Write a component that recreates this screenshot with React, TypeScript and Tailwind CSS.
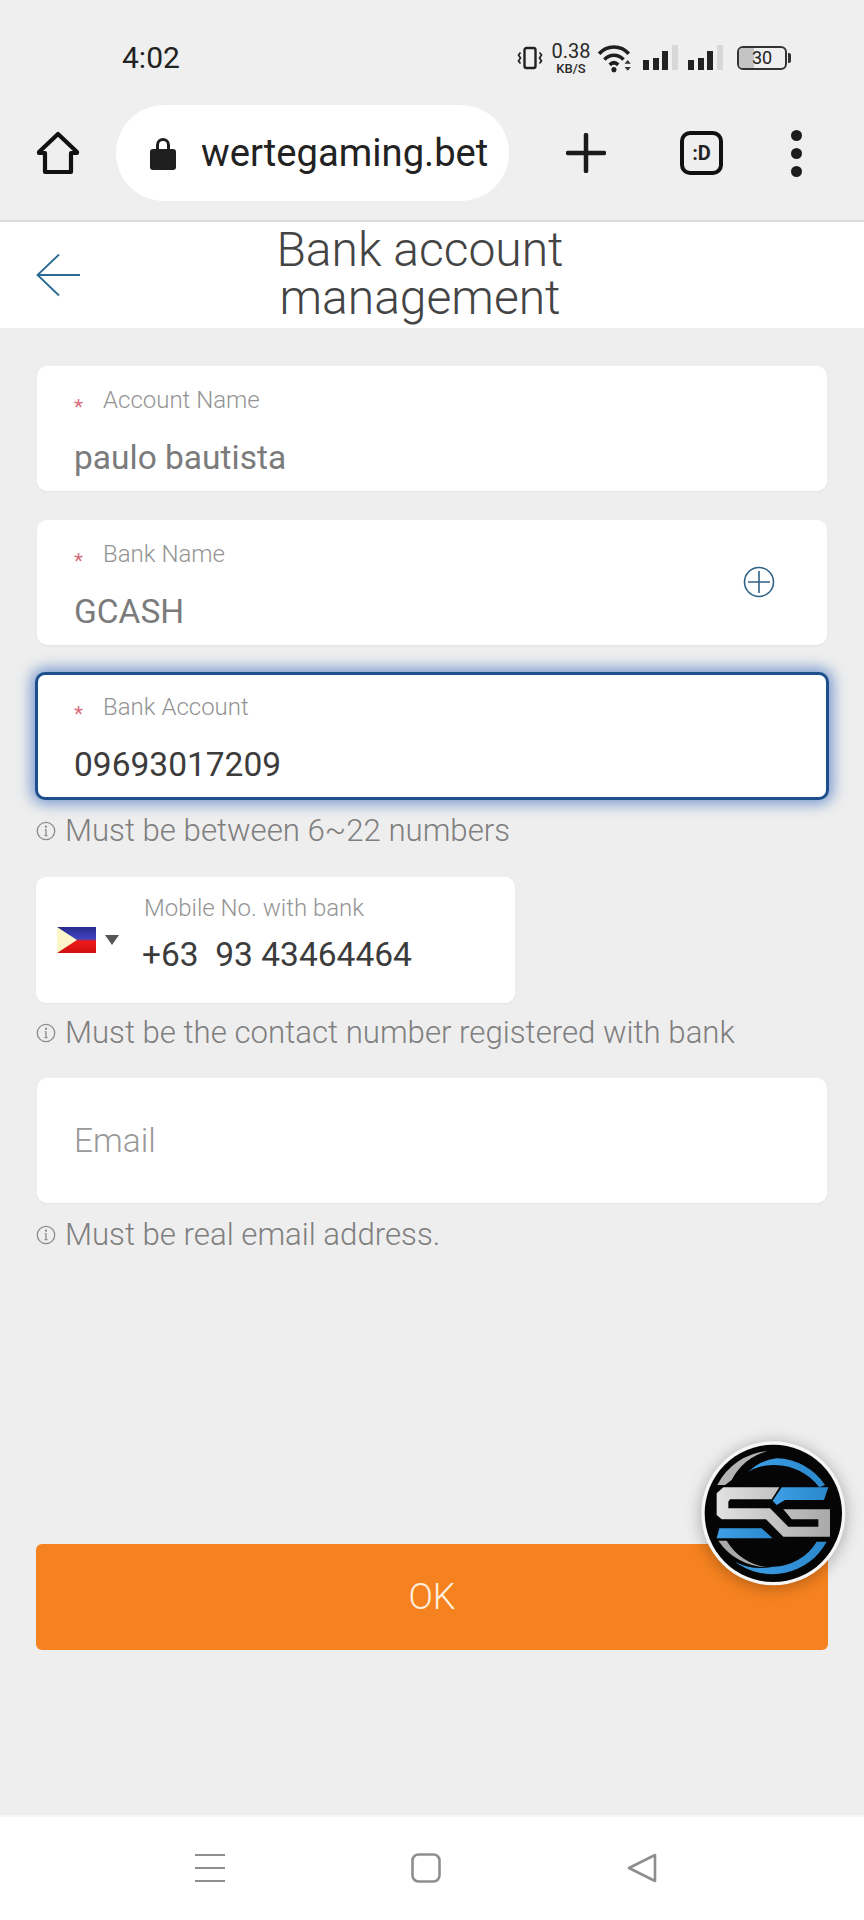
const Star = () => <span className="w-[29px] shrink-0 text-[21px] leading-none text-[#d9707f] pt-[11px] h-[28px]">*</span>;

function Field({ label, value, dark, plus, focused }: { label: string; value: string; dark?: boolean; plus?: boolean; focused?: boolean }) {
  return (
    <div className={focused
      ? "mt-[27px] -mx-[2px] h-[128px] rounded-[10px] bg-white border-[3px] border-[#1d4f8c] shadow-[0_0_14px_4px_rgba(60,110,190,0.65)] flex items-center pl-[36px] pr-[52px]"
      : "h-[125px] rounded-[10px] bg-white shadow-[0_1px_2px_rgba(0,0,0,0.05)] flex items-center pl-[37px] pr-[52px]"}>
      <div className="flex-1 pt-[8px]">
        <div className="flex items-start h-[28px]">
          <Star />
          <span className="text-[24px] leading-[28px] font-light text-[#949494]">{label}</span>
        </div>
        <div className={"mt-[22px] h-[44px] text-[33.5px] leading-[44px] " + (dark ? "text-[#3c3c3c]" : "text-[#7b7b7b]")}>{value}</div>
      </div>
      {plus && (
        <svg width="32" height="32" viewBox="0 0 32 32" fill="none" stroke="#2d6285" strokeWidth="1.6" className="mb-[2px]">
          <circle cx="16" cy="16" r="14.5" />
          <path d="M16 5v22M5 16h22" />
        </svg>
      )}
    </div>
  );
}

function Hint({ children, className }: { children: string; className: string }) {
  return (
    <div className={"flex items-center h-[40px] " + className}>
      <svg width="20" height="20" viewBox="0 0 20 20" fill="none" stroke="#8c8c8c" strokeWidth="1.3" className="shrink-0">
        <circle cx="10" cy="10" r="8.7" />
        <path d="M10 8.6v6M8.5 14.6h3M8.8 8.6H10" />
        <circle cx="10" cy="5.7" r="0.5" fill="#8c8c8c" />
      </svg>
      <span className="ml-[9px] text-[31.2px] leading-[40px] font-light text-[#7f7f7f]">{children}</span>
    </div>
  );
}

function Logo() {
  return (
    <svg width="146" height="146" viewBox="60 30 438 438" className="absolute left-[700px] top-[1440px] drop-shadow-[0_2px_8px_rgba(0,0,0,0.3)]">
      <defs>
        <linearGradient id="sg" x1="0" y1="0" x2="1" y2="0">
          <stop offset="0" stopColor="#e2e2e2" />
          <stop offset="0.5" stopColor="#c4c4c4" />
          <stop offset="1" stopColor="#a9a9a9" />
        </linearGradient>
        <linearGradient id="sb" x1="0" y1="0" x2="1" y2="0">
          <stop offset="0" stopColor="#3d9fe6" />
          <stop offset="1" stopColor="#2b88cc" />
        </linearGradient>
      </defs>
      <circle cx="280" cy="250" r="216" fill="#f6f6f6" />
      <circle cx="280" cy="250" r="206" fill="#050505" />
      <path d="M112 165A188 188 0 0 1 262 63A175 175 0 0 0 155 150L135 165Z" fill="#b4b4b4" />
      <path d="M205 125A150 150 0 0 1 290 85A180 180 0 0 1 435 165L418 172A170 170 0 0 0 285 105A140 140 0 0 0 205 125Z" fill="url(#sb)" />
      <path d="M115 332H140A165 165 0 0 0 262 412A180 180 0 0 1 115 332Z" fill="#a9a9a9" />
      <path d="M165 395A185 185 0 0 0 440 335H410A155 155 0 0 1 280 410A170 170 0 0 1 165 395Z" fill="url(#sb)" />
      <path d="M130 172H298L275 208H150L145 215V235H270L325 290H415V268H335L310 238H450V320H310L258 268H125L110 255V190Z" fill="url(#sg)" />
      <path d="M305 172H445L432 210H315L290 225L278 212Z" fill="url(#sb)" />
      <path d="M118 295H245L278 325H110Z" fill="url(#sb)" />
    </svg>
  );
}

function Signal({ className }: { className: string }) {
  return (
    <svg width="36" height="26" viewBox="0 0 36 26" className={className}>
      <rect x="0" y="15" width="6" height="10" fill="#222" />
      <rect x="10" y="13" width="6" height="12" fill="#222" />
      <rect x="19" y="6" width="6" height="19" fill="#222" />
      <rect x="29" y="0" width="6" height="25" fill="#d8d8d8" />
    </svg>
  );
}

export default function App() {
  return (
    <div className="relative w-[864px] h-[1920px] bg-[#eeeeee] flex flex-col overflow-hidden font-['Roboto',sans-serif]">
      <div className="h-[222px] shrink-0 bg-[#efefef] border-b-[2px] border-[#dcdcdc]">
        <div className="mt-0 pt-[40px] h-[76px] flex items-center pl-[122px] pr-[73px]">
          <span className="text-[30px] leading-[36px] text-[#222]">4:02</span>
          <div className="ml-auto flex items-center h-[36px] text-[#2a2a2a]">
            <svg width="26" height="26" viewBox="0 0 26 26" fill="none" stroke="#222" strokeWidth="2.4">
              <rect x="7.5" y="3" width="11" height="20" rx="2" />
              <path d="M3.5 7.5 1.5 10l2 3-2 3 2 2.5M22.5 7.500l2 2.500-2 3 2 3-2 2.500" strokeWidth="1.700" />
            </svg>
            <div className="ml-[8px] w-[40px] flex flex-col items-center gap-[1px]">
              <div className="text-[20px] leading-[20px]">0.38</div>
              <div className="text-[13px] leading-[14px] font-medium">KB/S</div>
            </div>
            <svg width="36" height="30" viewBox="0 0 34 28" className="ml-[6px]" fill="none" stroke="#1f1f1f" strokeWidth="3.4">
              <path d="M2 10C9.5 1.5 22.5 1.5 30 10" />
              <path d="M7 15.5c5-5.5 13-5.5 18 0" />
              <path d="M12 20.5c2.5-2.5 5.500-2.500 8 0" />
              <circle cx="16" cy="25" r="2.400" fill="#1f1f1f" stroke="none" />
              <path d="M26 19.500l3-3.500 3 3.500zM26 22.500l3 3.500 3-3.500z" fill="#333" stroke="none" />
            </svg>
            <Signal className="ml-[10px]" />
            <Signal className="ml-[9px]" />
            <div className="ml-[13px] relative w-[50px] h-[24px] rounded-[6px] border-[2px] border-[#333] flex items-center justify-center overflow-hidden">
              <div className="absolute left-0 top-0 bottom-0 w-[15px] bg-[#c4c4c4]" />
              <span className="relative text-[18px] leading-[20px] text-[#222]">30</span>
            </div>
            <div className="ml-[1px] w-[3px] h-[10px] rounded-r-[2px] bg-[#333]" />
          </div>
        </div>
        <div className="mt-[29px] h-[96px] flex items-center pl-[36px]">
          <svg width="44" height="44" viewBox="0 0 44 44" fill="none" stroke="#111" strokeWidth="4.2" strokeLinejoin="round" strokeLinecap="round">
            <path d="M22 3 3 21v1h6v19h26V22h6v-1z" />
          </svg>
          <div className="ml-[36px] w-[393px] h-[96px] rounded-[48px] bg-white flex items-center pl-[34px]">
            <svg width="26" height="34" viewBox="0 0 26 34" fill="#1f1f1f">
              <path d="M6 14V9a7 7 0 0 1 14 0v5h-3V9a4 4 0 0 0-8 0v5z" />
              <rect x="0" y="13" width="26" height="21" rx="3" />
            </svg>
            <span className="ml-[25px] text-[38.2px] leading-[44px] text-[#222] whitespace-nowrap">wertegaming.bet</span>
          </div>
          <svg width="40" height="40" viewBox="0 0 40 40" className="ml-[57px]" stroke="#1a1a1a" strokeWidth="4.500" strokeLinecap="round">
            <path d="M20 2v36M2 20h36" />
          </svg>
          <div className="ml-[74px] w-[43px] h-[44px] rounded-[10px] border-[4.5px] border-[#111] flex items-center justify-center">
            <span className="text-[20px] leading-none font-bold text-[#222]">:D</span>
          </div>
          <div className="ml-[68px] flex flex-col gap-[7px]">
            <div className="w-[11px] h-[11px] rounded-full bg-[#1d1d1d]" />
            <div className="w-[11px] h-[11px] rounded-full bg-[#1d1d1d]" />
            <div className="w-[11px] h-[11px] rounded-full bg-[#1d1d1d]" />
          </div>
        </div>
      </div>

      <div className="h-[106px] shrink-0 bg-white flex items-center pl-[37px]">
        <svg width="44" height="44" viewBox="0 0 44 44" fill="none" stroke="#2a6a94" strokeWidth="1.8" className="-mt-[1px] -ml-[1px]">
          <path d="M23 1.500 1.500 22 23 42.500M1.500 22H44" />
        </svg>
        <div className="ml-[190px] w-[300px] -mt-[2px] text-center text-[48px] leading-[48px] font-light text-[#444]">Bank account management</div>
      </div>

      <div className="flex-1 px-[37px] pt-[38px] flex flex-col">
        <Field label="Account Name" value="paulo bautista" />
        <div className="mt-[29px]">
          <Field label="Bank Name" value="GCASH" plus />
        </div>
        <Field label="Bank Account" value="09693017209" dark focused />
        <Hint className="mt-[11px] -ml-[1px]">Must be between 6~22 numbers</Hint>
        <div className="mt-[26px] -ml-[1px] w-[479px] h-[126px] rounded-[10px] bg-white shadow-[0_1px_2px_rgba(0,0,0,0.05)] flex">
          <div className="w-[106px] shrink-0 pl-[21px] pt-[50px] flex items-start">
            <svg width="39" height="26" viewBox="0 0 39 26">
              <defs>
                <linearGradient id="ph" x1="0" y1="0" x2="0" y2="1">
                  <stop offset="0" stopColor="#2a2a8a" />
                  <stop offset="0.45" stopColor="#3f44c0" />
                  <stop offset="0.55" stopColor="#f01818" />
                  <stop offset="1" stopColor="#d01010" />
                </linearGradient>
              </defs>
              <rect width="39" height="26" fill="url(#ph)" />
              <path d="M0 0 20 13 0 26z" fill="#fdf6c8" />
            </svg>
            <svg width="14" height="10" viewBox="0 0 14 10" className="ml-[9px] mt-[8px]">
              <path d="M0 0h14L7 10z" fill="#555" />
            </svg>
          </div>
          <div className="flex-1">
            <div className="pl-[2px] mt-[17px] h-[28px] text-[24px] leading-[28px] font-light text-[#949494] whitespace-nowrap">Mobile No. with bank</div>
            <div className="mt-[11px] h-[44px] text-[33.5px] leading-[44px] text-[#3c3c3c] whitespace-pre">+63  93 43464464</div>
          </div>
        </div>
        <Hint className="mt-[10px] -ml-[1px]">Must be the contact number registered with bank</Hint>
        <div className="mt-[25px] h-[125px] rounded-[10px] bg-white shadow-[0_1px_2px_rgba(0,0,0,0.05)] flex items-center pl-[37px] pt-[2px] text-[33.5px] font-light text-[#999]">Email</div>
        <Hint className="mt-[12px] -ml-[1px]">Must be real email address.</Hint>
        <div className="mt-[289px] -mx-[1px] h-[106px] rounded-[6px] bg-[#f6821f] flex items-center justify-center text-[36px] font-light text-[#fdeede]">OK</div>
      </div>

      <div className="h-[105px] shrink-0 bg-white border-t-[2px] border-[#f6f6f6] flex items-start pt-[36px]">
        <svg width="30" height="30" viewBox="0 0 30 30" className="ml-[195px]" stroke="#8e8e8e" strokeWidth="2.200">
          <path d="M0 2h30M0 15h30M0 28h30" />
        </svg>
        <svg width="30" height="30" viewBox="0 0 30 30" className="ml-[186px]" fill="none" stroke="#8e8e8e" strokeWidth="2.600">
          <rect x="1.500" y="1.500" width="27" height="27" rx="6" />
        </svg>
        <svg width="30" height="30" viewBox="0 0 30 30" className="ml-[186px]" fill="none" stroke="#8e8e8e" strokeWidth="2.600" strokeLinejoin="round">
          <path d="M28 2 2 15l26 13z" />
        </svg>
      </div>

      <Logo />
    </div>
  );
}
